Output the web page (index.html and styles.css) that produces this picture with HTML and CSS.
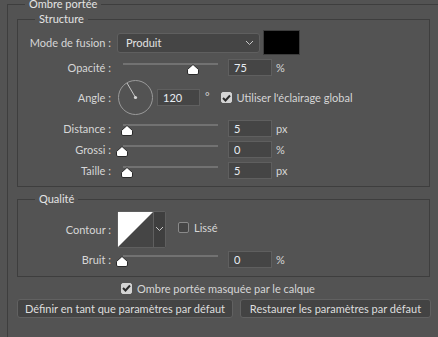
FILE: index.html
```html
<!DOCTYPE html>
<html lang="fr">
<head>
  <meta charset="UTF-8" />
  <title>Ombre portée</title>
  <link rel="stylesheet" href="styles.css">
</head>
<body>
  <fieldset class="group">
    <legend>Ombre portée</legend>

    <fieldset class="box structure">
      <legend>Structure</legend>

      <div class="row row-mode">
        <label class="lbl">Mode de fusion :</label>
        <div class="select">
          <span>Produit</span>
          <svg class="chev" width="9" height="6" viewBox="0 0 9 6"><path d="M1 1l3.5 3.5L8 1" fill="none" stroke="#c8c8c8" stroke-width="1"/></svg>
        </div>
        <div class="swatch"></div>
      </div>

      <div class="row">
        <label class="lbl">Opacité :</label>
        <div class="slider">
          <div class="track"></div>
          <svg class="thumb" style="left: 70px" width="12" height="11" viewBox="0 0 12 11"><path d="M6 .5l5.5 5v3.5q0 1.5-1.5 1.5H2Q.5 10.5.5 9V5.5z" fill="#fff" stroke="#2a2a2a"/></svg>
        </div>
        <input class="num" value="75">
        <span class="unit">%</span>
      </div>

      <div class="row row-angle">
        <label class="lbl">Angle :</label>
        <svg class="dial" width="37" height="37" viewBox="0 0 37 37">
          <circle cx="18.5" cy="18.5" r="17" fill="none" stroke="#9a9a9a" stroke-width="1"/>
          <path d="M18.5 18.5L10 4" stroke="#c8c8c8" stroke-width="1"/>
          <circle cx="18.5" cy="18.5" r="1.6" fill="#d8d8d8"/>
        </svg>
        <input class="num angle" value="120">
        <span class="deg">°</span>
        <label class="check">
          <span class="cb on"><svg width="9" height="8" viewBox="0 0 9 8"><path d="M1 4l2.5 2.5L8 1.5" fill="none" stroke="#2b2b2b" stroke-width="2"/></svg></span>
          Utiliser l'éclairage global
        </label>
      </div>

      <div class="row">
        <label class="lbl">Distance :</label>
        <div class="slider">
          <div class="track"></div>
          <svg class="thumb" style="left: 4px" width="12" height="11" viewBox="0 0 12 11"><path d="M6 .5l5.5 5v3.5q0 1.5-1.5 1.5H2Q.5 10.5.5 9V5.5z" fill="#fff" stroke="#2a2a2a"/></svg>
        </div>
        <input class="num" value="5">
        <span class="unit">px</span>
      </div>

      <div class="row">
        <label class="lbl">Grossi :</label>
        <div class="slider">
          <div class="track"></div>
          <svg class="thumb" style="left: -1px" width="12" height="11" viewBox="0 0 12 11"><path d="M6 .5l5.5 5v3.5q0 1.5-1.5 1.5H2Q.5 10.5.5 9V5.5z" fill="#fff" stroke="#2a2a2a"/></svg>
        </div>
        <input class="num" value="0">
        <span class="unit">%</span>
      </div>

      <div class="row">
        <label class="lbl">Taille :</label>
        <div class="slider">
          <div class="track"></div>
          <svg class="thumb" style="left: 4px" width="12" height="11" viewBox="0 0 12 11"><path d="M6 .5l5.5 5v3.5q0 1.5-1.5 1.5H2Q.5 10.5.5 9V5.5z" fill="#fff" stroke="#2a2a2a"/></svg>
        </div>
        <input class="num" value="5">
        <span class="unit">px</span>
      </div>
    </fieldset>

    <fieldset class="box quality">
      <legend>Qualité</legend>

      <div class="row row-contour">
        <label class="lbl">Contour :</label>
        <div class="contour">
          <svg class="curve" width="35" height="35" viewBox="0 0 35 35"><path d="M0 0H35L0 35z" fill="#fff"/></svg>
          <div class="drop">
            <svg width="9" height="6" viewBox="0 0 9 6"><path d="M1 1l3.5 3.5L8 1" fill="none" stroke="#c8c8c8" stroke-width="1"/></svg>
          </div>
        </div>
        <label class="check smooth">
          <span class="cb"></span>
          Lissé
        </label>
      </div>

      <div class="row">
        <label class="lbl">Bruit :</label>
        <div class="slider">
          <div class="track"></div>
          <svg class="thumb" style="left: -1px" width="12" height="11" viewBox="0 0 12 11"><path d="M6 .5l5.5 5v3.5q0 1.5-1.5 1.5H2Q.5 10.5.5 9V5.5z" fill="#fff" stroke="#2a2a2a"/></svg>
        </div>
        <input class="num" value="0">
        <span class="unit">%</span>
      </div>
    </fieldset>

    <label class="check knockout">
      <span class="cb on"><svg width="9" height="8" viewBox="0 0 9 8"><path d="M1 4l2.5 2.5L8 1.5" fill="none" stroke="#2b2b2b" stroke-width="2"/></svg></span>
      Ombre portée masquée par le calque
    </label>

    <div class="buttons">
      <button class="btn btn-set">Définir en tant que paramètres par défaut</button>
      <button class="btn btn-reset">Restaurer les paramètres par défaut</button>
    </div>
  </fieldset>
</body>
</html>
```

FILE: styles.css
```css
html, body {
  margin: 0;
  height: 100%;
  overflow: hidden;
}
body {
  background: #535353;
  color: #d6d6d6;
  font-family: Lato, "Noto Sans", sans-serif;
  font-size: 11px;
}
fieldset {
  margin: 0;
  padding: 0;
  border: 1px solid #3e3e3e;
  min-width: 0;
}
legend {
  padding: 0 4px;
  line-height: 14px;
  color: #e4e4e4;
}
.group {
  margin: -2px 0 0 7px;
  height: 339px;
  box-sizing: border-box;
  border-width: 1px 0 0 1px;
}
.group > legend {
  margin-left: 17px;
  line-height: 12px;
}
.box {
  margin-left: 9px;
  width: 411px;
}
.box > legend {
  margin-left: 17px;
}
.structure {
  margin-top: 2px;
  padding: 4px 0 7px;
}
.quality {
  margin-top: 5px;
  padding: 5px 0 8px;
}
.row {
  display: flex;
  align-items: center;
  height: 17px;
  margin-top: 4px;
}
.row-mode {
  height: 25px;
  margin-top: 0;
}
.row-angle {
  height: 37px;
  margin-top: 3px;
}
.row-contour {
  height: 36px;
  margin-top: 0;
}
.lbl {
  width: 93px;
  margin-right: 6px;
  text-align: right;
  white-space: nowrap;
}
.select {
  width: 141px;
  height: 18px;
  box-sizing: content-box;
  border: 1px solid #5f5f5f;
  border-radius: 3px;
  background: #454545;
  display: flex;
  align-items: center;
  justify-content: space-between;
}
.select span {
  padding-left: 8px;
  color: #e2e2e2;
}
.select .chev {
  margin-right: 5px;
}
.swatch {
  width: 35px;
  height: 23px;
  margin-left: 3px;
  background: #000;
  border: 1px solid #3c3c3c;
}
.slider {
  position: relative;
  width: 106px;
  height: 17px;
  margin-right: 5px;
}
.track {
  height: 2px;
  margin: 4px 5px 0 6px;
  background: #727272;
}
.thumb {
  position: absolute;
  top: 5px;
}
.num {
  width: 37px;
  height: 15px;
  padding: 0 0 0 5px;
  box-sizing: content-box;
  border: 1px solid #5f5f5f;
  background: #454545;
  color: #e8eef4;
  font: inherit;
  outline: none;
}
.num.angle {
  width: 36px;
  margin-left: 3px;
}
.unit {
  margin-left: 4px;
}
.deg {
  margin-left: 5px;
  margin-right: 11px;
  align-self: flex-start;
  margin-top: 11px;
}
.check {
  display: flex;
  align-items: center;
  white-space: nowrap;
}
.cb {
  width: 9px;
  height: 9px;
  margin-right: 5px;
  border: 1px solid #8a8a8a;
  border-radius: 2px;
  background: #454545;
  display: flex;
  align-items: center;
  justify-content: center;
}
.cb.on {
  background: #d4d4d4;
  border-color: #d4d4d4;
}
.dial {
  display: block;
}
.contour {
  display: flex;
  height: 35px;
  border: 1px solid #5f5f5f;
  border-radius: 2px;
  background: #454545;
}
.curve {
  display: block;
}
.drop {
  width: 11px;
  border-left: 1px solid #5f5f5f;
  background: #3f3f3f;
  display: flex;
  align-items: center;
  justify-content: center;
}
.smooth {
  margin-left: 12px;
  margin-top: -4px;
}
.knockout {
  height: 14px;
  margin: 4px 0 0 113px;
}
.buttons {
  display: flex;
  gap: 7px;
  margin: 4px 0 0 9px;
}
.btn {
  height: 19px;
  padding: 0;
  border: 1px solid #616161;
  border-radius: 3px;
  background: #434343;
  color: #dedede;
  font: inherit;
  white-space: nowrap;
}
.btn-set {
  width: 216px;
}
.btn-reset {
  width: 191px;
}
```
